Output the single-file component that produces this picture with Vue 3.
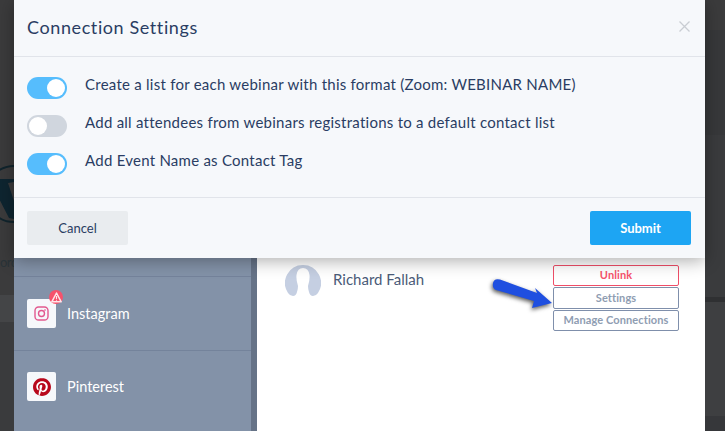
<script setup>
const options = [
  { label: 'Create a list for each webinar with this format (Zoom: WEBINAR NAME)', on: true },
  { label: 'Add all attendees from webinars registrations to a default contact list', on: false },
  { label: 'Add Event Name as Contact Tag', on: true }
]
</script>

<template>
  <div class="page">
    <div class="strip">
      <svg class="wp-logo" width="58" height="58" viewBox="0 0 58 58">
        <circle cx="29" cy="29" r="28" fill="none" stroke="#10242d" stroke-width="2" />
        <path d="M5 16 L9 14 H29 V17 L23 18 L33 48 L29 54 L24 53 Z" fill="#0e2530" />
      </svg>
      <span class="wp-name">ord</span>
    </div>

    <aside class="sidebar">
      <div class="network">
        <div class="tile">
          <svg width="15" height="15" viewBox="0 0 15 15" fill="none" stroke="#e2598f" stroke-width="1.4">
            <rect x="1" y="1" width="13" height="13" rx="3.6" />
            <circle cx="7.5" cy="7.5" r="3" />
            <circle cx="11" cy="4" r=".5" fill="#e2598f" stroke-width=".6" />
          </svg>
          <span class="alert">
            <svg width="11" height="11" viewBox="0 0 11 11">
              <path d="M5.500 1 L10.200 9.800 H.8 Z" fill="none" stroke="#ffe6ea" stroke-width="1.5" stroke-linejoin="round" />
              <path d="M5.500 4 V7 M5.500 7.800 V8.800" stroke="#ffe6ea" stroke-width="1.1" />
            </svg>
          </span>
        </div>
        <span class="network-name">Instagram</span>
      </div>
      <div class="network">
        <div class="tile">
          <svg width="18" height="18" viewBox="0 0 24 24">
            <circle cx="12" cy="12" r="10" fill="#fff" />
            <path fill="#b8081c" d="M12.017 0C5.396 0 .029 5.367.029 11.987c0 5.079 3.158 9.417 7.618 11.162-.105-.949-.199-2.403.041-3.439.219-.937 1.406-5.957 1.406-5.957s-.359-.72-.359-1.781c0-1.663.967-2.911 2.168-2.911 1.024 0 1.518.769 1.518 1.688 0 1.029-.653 2.567-.992 3.992-.285 1.193.6 2.165 1.775 2.165 2.128 0 3.768-2.245 3.768-5.487 0-2.861-2.063-4.869-5.008-4.869-3.41 0-5.409 2.562-5.409 5.199 0 1.033.394 2.143.889 2.741.099.12.112.225.085.345-.09.375-.293 1.199-.334 1.363-.053.225-.172.271-.401.165-1.495-.69-2.433-2.878-2.433-4.646 0-3.776 2.748-7.252 7.92-7.252 4.158 0 7.392 2.967 7.392 6.923 0 4.135-2.607 7.462-6.233 7.462-1.214 0-2.354-.629-2.758-1.379l-.749 2.848c-.269 1.045-1.004 2.352-1.498 3.146 1.123.345 2.306.535 3.55.535 6.607 0 11.985-5.365 11.985-11.987C23.97 5.39 18.592.026 11.985.026L12.017 0z" />
          </svg>
        </div>
        <span class="network-name">Pinterest</span>
      </div>
    </aside>

    <main class="panel">
      <div class="account">
        <svg class="avatar" width="36" height="31" viewBox="0 0 36 31">
          <path d="M18 0 A18 18 0 0 1 33 28 Q31 31 28 31 Q25 31 24 27 Q23 24 23 21 Q25 15 24.500 10 Q23.500 3 18 3 Q12.500 3 11.500 10 Q11 15 13 21 Q13 24 12 27 Q11 31 8 31 Q5 31 3 28 A18 18 0 0 1 18 0 Z" fill="#c5cfe2" />
        </svg>
        <span class="name">Richard Fallah</span>
        <div class="actions">
          <button class="action danger">Unlink</button>
          <button class="action tall">Settings</button>
          <button class="action">Manage Connections</button>
        </div>
      </div>
      <svg class="arrow" width="66" height="34" viewBox="0 0 66 34">
        <path d="M3 5 Q4 0 10 1.500 L47 15 L45 10 L62 25 L42 30 L44 23 L6 12 Q2 10 3 5 Z" fill="#1f4fe0" />
      </svg>
    </main>

    <div class="strip-right"></div>

    <section class="modal">
      <header class="modal-head">
        <h2>Connection Settings</h2>
        <svg width="11" height="11" viewBox="0 0 11 11" stroke="#c9cdd3" stroke-width="1.3">
          <path d="M.5 .5 L10.500 10.500 M10.500 .5 L.5 10.500" />
        </svg>
      </header>
      <div class="modal-body">
        <div v-for="opt in options" :key="opt.label" class="option">
          <span class="toggle" :class="{ on: opt.on }"><i></i></span>
          <span class="label">{{ opt.label }}</span>
        </div>
      </div>
      <footer class="modal-foot">
        <button class="btn cancel">Cancel</button>
        <button class="btn submit">Submit</button>
      </footer>
    </section>
  </div>
</template>

<style>
body {
  margin: 0;
}
</style>

<style scoped>
.page {
  position: relative;
  display: flex;
  width: 725px;
  height: 431px;
  overflow: hidden;
  font-family: Lato, "Open Sans", sans-serif;
}

.strip {
  width: 14px;
  flex: none;
  overflow: hidden;
  padding-top: 165px;
  box-sizing: border-box;
  background: linear-gradient(#3b3b3c 0, #3b3b3c 295px, #444547 295px, #444547 322px, #3a3b3d 322px);
}

.wp-logo {
  display: block;
  margin-left: -15px;
}

.wp-name {
  display: block;
  margin-top: 31px;
  text-align: right;
  font-size: 13px;
  line-height: 16px;
  letter-spacing: -0.6px;
  color: #2a3338;
}

.sidebar {
  width: 237px;
  flex: none;
  box-sizing: border-box;
  padding-top: 276px;
  background: #8392a8;
}

.network {
  display: flex;
  align-items: center;
  gap: 11px;
  height: 74px;
  box-sizing: border-box;
  padding-left: 13px;
  border-top: 1px solid #74839b;
  color: #fff;
  font-size: 14.500px;
}

.network + .network {
  padding-bottom: 2px;
}

.tile {
  position: relative;
  display: flex;
  align-items: center;
  justify-content: center;
  width: 29px;
  height: 29px;
  background: #f6f8fb;
  border-radius: 2px;
}

.alert {
  position: absolute;
  top: -9px;
  right: -7px;
  display: flex;
  align-items: center;
  justify-content: center;
  width: 14px;
  height: 14px;
  border-radius: 50%;
  background: #f6526c;
}

.panel {
  position: relative;
  width: 454px;
  flex: none;
  box-sizing: border-box;
  background: #fff;
  border-left: 6px solid #667387;
}

.account {
  display: flex;
  align-items: flex-start;
  padding: 265px 26px 0 28px;
}

.avatar {
  flex: none;
}

.name {
  margin: 5px 0 0 12px;
  font-size: 15px;
  line-height: 18px;
  color: #4b5b78;
  flex: 1;
}

.actions {
  display: flex;
  flex-direction: column;
  gap: 1px;
  width: 126px;
  flex: none;
}

.action {
  height: 21px;
  padding: 0 0 2px;
  background: #fff;
  border: 1px solid #7f8fab;
  border-radius: 2px;
  font-family: inherit;
  font-size: 11px;
  font-weight: 700;
  letter-spacing: 0.1px;
  color: #8f9db2;
}

.action.tall {
  height: 22px;
}

.action.danger {
  border-color: #ef4e68;
  color: #f6526c;
}

.arrow {
  position: absolute;
  left: 233px;
  top: 278px;
  filter: drop-shadow(-1px 2px 2px rgba(0, 0, 0, 0.65));
}

.strip-right {
  flex: 1;
  background: linear-gradient(#3b3b3c 0, #3b3b3c 30px, #37383a 30px, #37383a 135px, #3a3b3d 135px, #3a3b3d 297px, #2f3032 297px, #2f3032 302px, #3e3f41 302px, #3e3f41 416px, #36373a 416px);
}

.modal {
  position: absolute;
  left: 14px;
  top: 0;
  width: 691px;
  height: 258px;
  display: flex;
  flex-direction: column;
  box-sizing: border-box;
  background: #f6f8fb;
  box-shadow: 0 3px 16px rgba(0, 0, 0, 0.32);
}

.modal-head {
  display: flex;
  align-items: center;
  justify-content: space-between;
  height: 57px;
  flex: none;
  box-sizing: border-box;
  padding: 0 15px 3px 13px;
  border-bottom: 1px solid #e1e4ea;
}

.modal-head h2 {
  margin: 0;
  font-size: 18px;
  font-weight: 400;
  letter-spacing: 0.6px;
  color: #2a3d63;
}

.modal-body {
  flex: 1;
  box-sizing: border-box;
  padding: 20px 13px 0;
  display: flex;
  flex-direction: column;
  gap: 16px;
}

.option {
  display: flex;
  align-items: flex-start;
  height: 22px;
  gap: 18px;
}

.toggle {
  position: relative;
  width: 40px;
  height: 22px;
  flex: none;
  box-sizing: border-box;
  border-radius: 11px;
  background: #d0d6de;
}

.toggle i {
  position: absolute;
  top: 2px;
  left: 2px;
  width: 18px;
  height: 18px;
  border-radius: 50%;
  background: #fff;
}

.toggle.on {
  background: #56bdfd;
}

.toggle.on i {
  left: 20px;
}

.label {
  font-size: 15px;
  line-height: 18px;
  margin-top: -2px;
  letter-spacing: 0.25px;
  color: #2a3d63;
}

.modal-foot {
  display: flex;
  justify-content: space-between;
  align-items: center;
  height: 61px;
  flex: none;
  box-sizing: border-box;
  padding: 0 14px 0 13px;
  border-top: 1px solid #e1e4ea;
}

.btn {
  width: 101px;
  height: 34px;
  padding: 0;
  border: none;
  border-radius: 2px;
  font-family: inherit;
  font-size: 13px;
}

.cancel {
  background: #e9ecef;
  color: #2a3d63;
}

.submit {
  background: #1da5f3;
  color: #fff;
  font-weight: 700;
}
</style>
